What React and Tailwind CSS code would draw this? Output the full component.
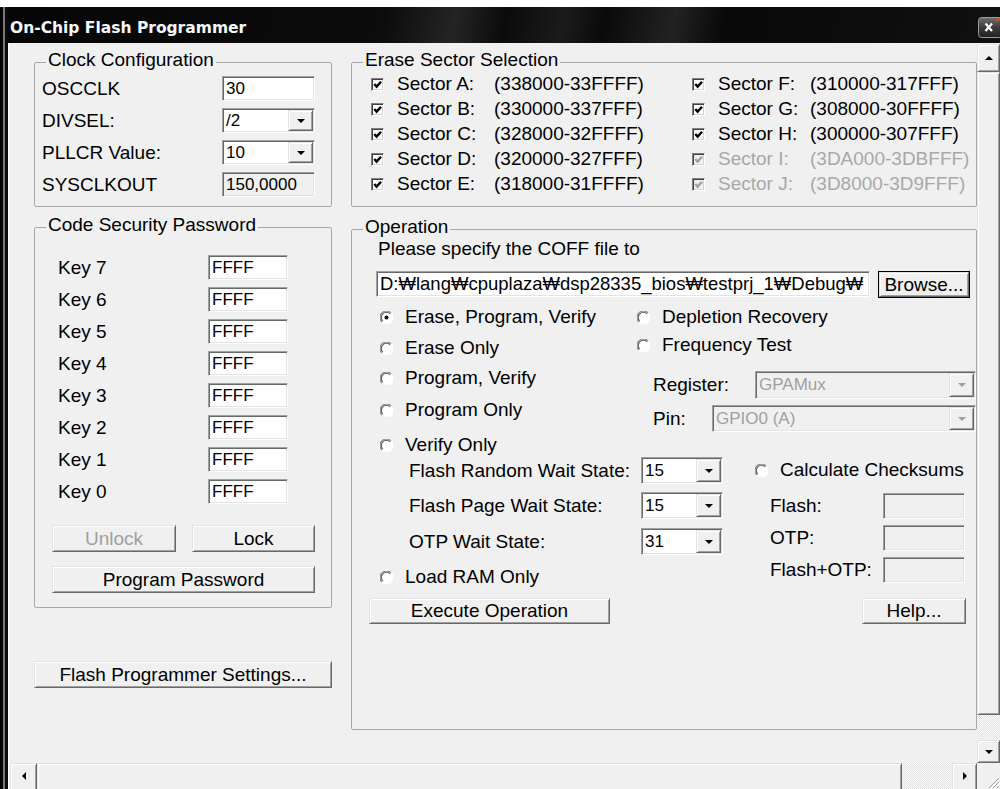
import React from "react";

// Classic Win32 3D edges
const SUNKEN =
  "border border-t-[#a0a0a0] border-l-[#a0a0a0] border-r-white border-b-white shadow-[inset_1px_1px_0_#696969,inset_-1px_-1px_0_#e3e3e3]";
const RAISED =
  "bg-[#f0f0f0] border border-t-[#e3e3e3] border-l-[#e3e3e3] border-r-[#696969] border-b-[#696969] shadow-[inset_1px_1px_0_#ffffff,inset_-1px_-1px_0_#a0a0a0]";
const HATCH =
  "bg-[image:repeating-conic-gradient(#e2e2e2_0%_25%,#fbfbfb_0%_50%)] bg-size-[2px_2px]";

function Tri({ dir, color = "#000" }) {
  if (dir === "up" || dir === "down") {
    return (
      <svg width="8" height="4" viewBox="0 0 8 4" className="shrink-0">
        <path d={dir === "down" ? "M0 0H8L4 4Z" : "M0 4H8L4 0Z"} fill={color} />
      </svg>
    );
  }
  return (
    <svg width="4" height="8" viewBox="0 0 4 8" className="shrink-0">
      <path d={dir === "left" ? "M4 0V8L0 4Z" : "M0 0V8L4 4Z"} fill={color} />
    </svg>
  );
}

function TextBox({ value = "", className = "", disabled }) {
  return (
    <div
      className={`${SUNKEN} ${
        disabled ? "bg-[#f0f0f0]" : "bg-white"
      } flex items-center pl-[3px] overflow-hidden whitespace-nowrap shrink-0 ${className}`}
    >
      {value}
    </div>
  );
}

function Combo({ value, className = "", disabled }) {
  return (
    <div
      className={`${SUNKEN} ${
        disabled ? "bg-[#f0f0f0] text-[#a0a0a0]" : "bg-white"
      } flex items-stretch p-[1px] shrink-0 ${className}`}
    >
      <div className="flex-1 min-w-0 flex items-center pl-[2px] text-[17px] overflow-hidden whitespace-nowrap">
        {value}
      </div>
      <div className={`${RAISED} w-[25px] flex items-center justify-center`}>
        <Tri dir="down" color={disabled ? "#a0a0a0" : "#000"} />
      </div>
    </div>
  );
}

function Btn({ children, className = "", disabled }) {
  return (
    <div
      className={`${RAISED} flex items-center justify-center whitespace-nowrap ${
        disabled ? "text-[#a0a0a0]" : ""
      } ${className}`}
    >
      {children}
    </div>
  );
}

function Check({ disabled }) {
  return (
    <div
      className={`border border-t-[#808080] border-l-[#808080] border-r-white border-b-white shadow-[inset_1px_1px_0_#404040,inset_-1px_-1px_0_#d4d4d4] w-[13px] h-[13px] ${
        disabled ? "bg-[#f0f0f0]" : "bg-white"
      } flex items-center justify-center shrink-0`}
    >
      <svg width="9" height="9" viewBox="0 0 9 9">
        <path
          d="M1.3 4L3.6 6.6L8 1.8"
          stroke={disabled ? "#a0a0a0" : "#000"}
          strokeWidth="2.4"
          fill="none"
        />
      </svg>
    </div>
  );
}

function Radio({ checked }) {
  return (
    <svg width="13" height="13" viewBox="0 0 13 13" className="shrink-0">
      <circle cx="6.5" cy="6.5" r="6" fill="#fff" />
      <path d="M1.9 11.1A6.1 6.1 0 0 1 11.1 1.9" fill="none" stroke="#8c8c8c" strokeWidth="1.2" />
      <path d="M2.8 10.2A5 5 0 0 1 10.2 2.8" fill="none" stroke="#5a5a5a" strokeWidth="1.1" />
      <path d="M11.1 1.9A6.1 6.1 0 0 1 1.9 11.1" fill="none" stroke="#ffffff" strokeWidth="1.2" />
      {checked && <circle cx="6.5" cy="6.5" r="2" fill="#000" />}
    </svg>
  );
}

function RadioRow({ label, checked, className = "" }) {
  return (
    <div className={`h-[22px] flex items-center gap-[12px] whitespace-nowrap ${className}`}>
      <Radio checked={checked} />
      <span>{label}</span>
    </div>
  );
}

function Group({ label, className = "", children }) {
  return (
    <fieldset className={`border border-[#a8a8a8] rounded-[2px] min-w-0 ${className}`}>
      <legend className="ml-[11px] px-[2px] leading-[16px] pb-[4px] whitespace-nowrap">{label}</legend>
      {children}
    </fieldset>
  );
}

function TitleBar() {
  return (
    <div className="h-[36px] shrink-0 flex items-center pl-[2px] pt-[6px] bg-[linear-gradient(100deg,#060606_0%,#0c0c0c_38%,#242424_45%,#0b0b0b_50%,#1b1b1b_56%,#0a0a0a_60%,#222222_67%,#090909_72%,#101010_100%)]">
      <span className="font-['DejaVu_Sans',sans-serif] font-bold text-[15.5px] leading-[18px] text-[#f5f8ff] whitespace-nowrap">
        On-Chip Flash Programmer
      </span>
      <div className="ml-auto self-end mb-[5px] w-[22px] h-[21px] shrink-0">
        <svg width="22" height="21" viewBox="0 0 22 21">
          <defs>
            <linearGradient id="closeFace" x1="0" y1="0" x2="0" y2="1">
              <stop offset="0" stopColor="#6e6e6e" />
              <stop offset="0.5" stopColor="#3c3c3c" />
              <stop offset="1" stopColor="#202020" />
            </linearGradient>
          </defs>
          <rect x="0.5" y="0.5" width="24" height="20" rx="3" fill="url(#closeFace)" stroke="#9c9c9c" />
          <path d="M7.5 6.5L14 14M14 6.5L7.5 14" stroke="#fff" strokeWidth="2.2" />
          <path d="M18 4.5L22 1.5" stroke="#e2461e" strokeWidth="2" />
        </svg>
      </div>
    </div>
  );
}

function ClockGroup() {
  const rows = [
    ["OSCCLK", <TextBox key="o" className="w-[93px] h-[25px] text-[17px]" value="30" />],
    ["DIVSEL:", <Combo key="d" className="w-[93px] h-[25px]" value="/2" />],
    ["PLLCR Value:", <Combo key="p" className="w-[93px] h-[25px]" value="10" />],
    ["SYSCLKOUT", <TextBox key="s" disabled className="w-[93px] h-[25px] text-[17px]" value="150,0000" />],
  ];
  return (
    <Group label="Clock Configuration">
      <div className="pt-[4px] pb-[9px] pl-[7px] pr-[16px] flex flex-col gap-[7px]">
        {rows.map(([label, ctl]) => (
          <div key={label} className="h-[25px] flex items-center justify-between">
            <span>{label}</span>
            {ctl}
          </div>
        ))}
      </div>
    </Group>
  );
}

function CodeGroup() {
  const keys = ["Key 7", "Key 6", "Key 5", "Key 4", "Key 3", "Key 2", "Key 1", "Key 0"];
  return (
    <Group label="Code Security Password" className="mt-[10px]">
      <div className="pt-[18px] pb-[14px] flex flex-col">
        <div className="pl-[23px] flex flex-col gap-[7px]">
          {keys.map((k) => (
            <div key={k} className="h-[25px] flex items-center">
              <span className="w-[150px]">{k}</span>
              <TextBox className="w-[80px] h-[25px] text-[17px]" value="FFFF" />
            </div>
          ))}
        </div>
        <div className="pl-[17px] mt-[21px] flex flex-col gap-[14px]">
          <div className="flex gap-[16px]">
            <Btn disabled className="w-[124px] h-[27px]">Unlock</Btn>
            <Btn className="w-[123px] h-[27px]">Lock</Btn>
          </div>
          <Btn className="w-[263px] h-[27px]">Program Password</Btn>
        </div>
      </div>
    </Group>
  );
}

const SECTORS_LEFT = [
  ["Sector A:", "(338000-33FFFF)"],
  ["Sector B:", "(330000-337FFF)"],
  ["Sector C:", "(328000-32FFFF)"],
  ["Sector D:", "(320000-327FFF)"],
  ["Sector E:", "(318000-31FFFF)"],
];
const SECTORS_RIGHT = [
  ["Sector F:", "(310000-317FFF)", false],
  ["Sector G:", "(308000-30FFFF)", false],
  ["Sector H:", "(300000-307FFF)", false],
  ["Sector I:", "(3DA000-3DBFFF)", true],
  ["Sector J:", "(3D8000-3D9FFF)", true],
];

function EraseGroup() {
  return (
    <Group label="Erase Sector Selection">
      <div className="pt-[2px] pb-[12px] pl-[19px] flex">
        <div className="w-[321px] flex flex-col gap-[5px]">
          {SECTORS_LEFT.map(([name, range]) => (
            <div key={name} className="h-[20px] flex items-center whitespace-nowrap">
              <Check />
              <span className="ml-[13px] w-[97px]">{name}</span>
              <span>{range}</span>
            </div>
          ))}
        </div>
        <div className="flex-1 flex flex-col gap-[5px]">
          {SECTORS_RIGHT.map(([name, range, off]) => (
            <div
              key={name}
              className={`h-[20px] flex items-center whitespace-nowrap ${off ? "text-[#a8a8a8]" : ""}`}
            >
              <Check disabled={off} />
              <span className="ml-[13px] w-[92px]">{name}</span>
              <span>{range}</span>
            </div>
          ))}
        </div>
      </div>
    </Group>
  );
}

function OperationGroup() {
  return (
    <Group label="Operation" className="mt-[12px] pb-[105px]">
      <div className="pl-[26px] h-[20px] whitespace-nowrap">Please specify the COFF file to</div>
      <div className="mt-[12px] pl-[24px] flex items-start">
        <TextBox
          className="w-[494px] h-[26px] text-[18.5px]"
          value="D:₩lang₩cpuplaza₩dsp28335_bios₩testprj_1₩Debug₩"
        />
        <div className="ml-[8px] w-[92px] h-[27px] border border-black flex">
          <Btn className="flex-1">Browse...</Btn>
        </div>
      </div>

      <div className="mt-[8px] flex items-start">
        <div className="w-[285px] pl-[28px] flex flex-col">
          <RadioRow checked label="Erase, Program, Verify" />
          <RadioRow className="mt-[9px]" label="Erase Only" />
          <RadioRow className="mt-[8px]" label="Program, Verify" />
          <RadioRow className="mt-[10px]" label="Program Only" />
          <RadioRow className="mt-[13px]" label="Verify Only" />
        </div>
        <div className="flex-1 min-w-0 flex flex-col">
          <RadioRow label="Depletion Recovery" />
          <RadioRow className="mt-[6px]" label="Frequency Test" />
          <div className="mt-[15px] h-[28px] pl-[16px] flex items-center">
            <span className="w-[102px] shrink-0">Register:</span>
            <Combo disabled className="flex-1 h-[28px]" value="GPAMux" />
          </div>
          <div className="mt-[6px] h-[27px] pl-[16px] flex items-center">
            <span className="w-[59px] shrink-0">Pin:</span>
            <Combo disabled className="flex-1 h-[27px]" value="GPIO0 (A)" />
          </div>
        </div>
      </div>

      <div className="flex items-start">
        <div className="w-[403px] flex flex-col">
          <div className="mt-[1px] pl-[57px] h-[27px] flex items-center">
            <span className="w-[232px] whitespace-nowrap">Flash Random Wait State:</span>
            <Combo className="w-[82px] h-[27px]" value="15" />
          </div>
          <div className="mt-[8px] pl-[57px] h-[27px] flex items-center">
            <span className="w-[232px] whitespace-nowrap">Flash Page Wait State:</span>
            <Combo className="w-[82px] h-[27px]" value="15" />
          </div>
          <div className="mt-[9px] pl-[57px] h-[27px] flex items-center">
            <span className="w-[232px] whitespace-nowrap">OTP Wait State:</span>
            <Combo className="w-[82px] h-[27px]" value="31" />
          </div>
          <RadioRow className="mt-[11px] pl-[28px]" label="Load RAM Only" />
          <div className="mt-[10px] pl-[17px]">
            <Btn className="w-[241px] h-[26px]">Execute Operation</Btn>
          </div>
        </div>
        <div className="flex-1 min-w-0 flex flex-col">
          <RadioRow className="mt-[3px]" label="Calculate Checksums" />
          <div className="mt-[12px] pl-[15px] h-[26px] flex items-center">
            <span className="w-[113px]">Flash:</span>
            <TextBox disabled className="w-[82px] h-[26px]" />
          </div>
          <div className="mt-[6px] pl-[15px] h-[26px] flex items-center">
            <span className="w-[113px]">OTP:</span>
            <TextBox disabled className="w-[82px] h-[26px]" />
          </div>
          <div className="mt-[6px] pl-[15px] h-[26px] flex items-center">
            <span className="w-[113px]">Flash+OTP:</span>
            <TextBox disabled className="w-[82px] h-[26px]" />
          </div>
          <div className="mt-[15px] pl-[107px]">
            <Btn className="w-[104px] h-[26px]">Help...</Btn>
          </div>
        </div>
      </div>
    </Group>
  );
}

function Content() {
  return (
    <div className="flex-1 min-w-0 bg-[#f0f0f0] flex items-start pt-[9px] pl-[25px] gap-[19px] overflow-hidden">
      <div className="w-[298px] shrink-0 flex flex-col">
        <ClockGroup />
        <CodeGroup />
        <Btn className="mt-[53px] h-[27px] w-full">Flash Programmer Settings...</Btn>
      </div>
      <div className="flex-1 min-w-0 flex flex-col">
        <EraseGroup />
        <OperationGroup />
      </div>
    </div>
  );
}

function VScroll() {
  return (
    <div className="w-[23px] shrink-0 flex flex-col bg-[#f0f0f0] pt-[1px]">
      <div className={`${RAISED} h-[28px] flex items-center justify-center`}>
        <Tri dir="up" />
      </div>
      <div className={`${RAISED} h-[643px]`} />
      <div className={`flex-1 ${HATCH}`} />
      <div className={`${RAISED} h-[23px] flex items-center justify-center`}>
        <Tri dir="down" />
      </div>
    </div>
  );
}

function HScroll() {
  return (
    <div className="h-[26px] shrink-0 flex items-start overflow-hidden bg-[#f0f0f0]">
      <div className="w-[1px] h-[28px] bg-[#f0f0f0]" />
      <div className={`${RAISED} w-[27px] h-[28px] flex items-center justify-center pb-[3px]`}>
        <Tri dir="left" />
      </div>
      <div className={`${RAISED} w-[865px] h-[28px]`} />
      <div className={`flex-1 h-[28px] ${HATCH}`} />
      <div className={`${RAISED} w-[25px] h-[28px] flex items-center justify-center pb-[3px]`}>
        <Tri dir="right" />
      </div>
      <div className="w-[23px] h-[26px] bg-[#f0f0f0] flex items-end justify-end">
        <svg width="14" height="14" viewBox="0 0 14 14">
          <path d="M13 3L3 13M13 7L7 13M13 11L11 13" stroke="#a0a0a0" strokeWidth="1" />
          <path d="M14 4L4 14M14 8L8 14" stroke="#ffffff" strokeWidth="1" />
        </svg>
      </div>
    </div>
  );
}

export default function App() {
  return (
    <div className="w-[1000px] h-[789px] overflow-hidden bg-white pt-[7px] font-['Liberation_Sans','Noto_Sans_CJK_KR',sans-serif] text-[19px] leading-[20px] text-black">
      <div className="h-[782px] flex bg-black">
        <div className="w-[8px] shrink-0 flex">
          <div className="w-[3px] bg-[#050505]" />
          <div className="w-[2px] bg-[#7a7a7a]" />
          <div className="w-[3px] bg-[#0a0a0a]" />
        </div>
        <div className="flex-1 min-w-0 flex flex-col">
          <TitleBar />
          <div className="flex-1 min-h-0 flex flex-col border-l border-white">
            <div className="flex-1 min-h-0 flex">
              <Content />
              <VScroll />
            </div>
            <HScroll />
          </div>
        </div>
      </div>
    </div>
  );
}
